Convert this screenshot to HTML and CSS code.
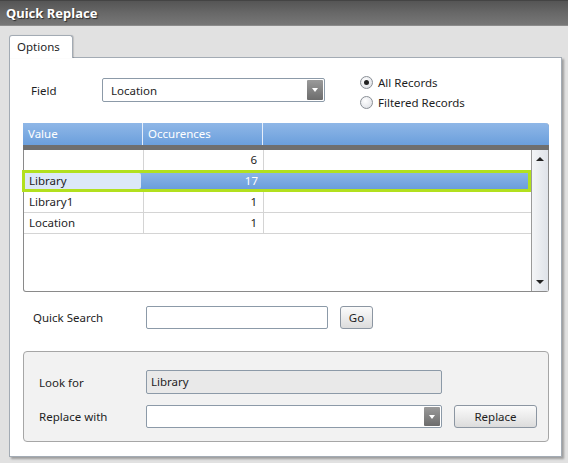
FILE: index.html
```html
<!DOCTYPE html>
<html lang="en">
<head>
  <meta charset="UTF-8">
  <title>Quick Replace</title>
  <link rel="stylesheet" href="styles.css">
</head>
<body>
  <div class="titlebar">Quick Replace</div>

  <div class="content">
    <div class="tabs">
      <div class="tab">Options</div>
    </div>

    <div class="panel">
      <div class="field-row">
        <span class="field-label">Field</span>
        <div class="combo field-combo">
          <span class="combo-text">Location</span>
          <span class="combo-btn"></span>
        </div>
        <div class="radios">
          <div class="radio"><span class="dot checked"></span>All Records</div>
          <div class="radio"><span class="dot"></span>Filtered Records</div>
        </div>
      </div>

      <div class="grid">
        <div class="grid-head">
          <div class="hcol c1">Value</div>
          <div class="hcol c2">Occurences</div>
          <div class="hcol c3"></div>
        </div>
        <div class="grid-band"></div>
        <div class="grid-body">
          <div class="rows">
            <div class="row">
              <div class="cell c1"></div>
              <div class="cell c2">6</div>
              <div class="cell c3"></div>
            </div>
            <div class="row selected">
              <div class="cell c1">Library</div>
              <div class="cell c2">17</div>
              <div class="cell c3"></div>
            </div>
            <div class="row">
              <div class="cell c1">Library1</div>
              <div class="cell c2">1</div>
              <div class="cell c3"></div>
            </div>
            <div class="row">
              <div class="cell c1">Location</div>
              <div class="cell c2">1</div>
              <div class="cell c3"></div>
            </div>
          </div>
          <div class="scrollbar">
            <span class="arrow up"></span>
            <span class="arrow down"></span>
          </div>
        </div>
      </div>

      <div class="search-row">
        <span class="search-label">Quick Search</span>
        <div class="textbox search-box"></div>
        <button class="btn go-btn">Go</button>
      </div>

      <div class="group">
        <div class="group-row">
          <span class="group-label">Look for</span>
          <div class="textbox look-box">Library</div>
        </div>
        <div class="group-row">
          <span class="group-label">Replace with</span>
          <div class="combo replace-combo">
            <span class="combo-text"></span>
            <span class="combo-btn"></span>
          </div>
          <button class="btn replace-btn">Replace</button>
        </div>
      </div>
    </div>
  </div>
</body>
</html>
```

FILE: styles.css
```css
body {
  margin: 0;
  padding: 0;
  width: 568px;
  height: 463px;
  background: #e1e1e1;
  font-family: 'Noto Sans', 'DejaVu Sans', sans-serif;
  font-size: 11.5px;
  color: #1e1e1e;
  overflow: hidden;
}

.titlebar {
  height: 24px;
  line-height: 24px;
  padding-left: 6px;
  background: linear-gradient(#555555, #686868 50%, #777777);
  border-top: 1px solid #444444;
  border-bottom: 1px solid #8c8c8c;
  color: white;
  font-weight: bold;
  font-size: 13px;
  text-shadow: 1px 1px 1px #2a2a2a;
  box-sizing: content-box;
}

.content {
  padding: 9px 6px 0 9px;
}

/* tab strip */
.tabs {
  display: flex;
}

.tab {
  width: 55px;
  height: 22px;
  line-height: 22px;
  padding-left: 7px;
  background: white;
  border: 1px solid #a3abb4;
  border-bottom: none;
  border-radius: 3px 3px 0 0;
  box-shadow: 1px 0 1px rgba(0, 0, 0, 0.15);
  position: relative;
  z-index: 1;
  margin-bottom: -1px;
}

.panel {
  background: white;
  border: 1px solid #a3abb4;
  box-shadow: 2px 2px 2px rgba(0, 0, 0, 0.3);
  padding: 20px 12px 14px 13px;
}

/* field row */
.field-row {
  display: flex;
  align-items: flex-start;
  height: 24px;
}

.field-label {
  width: 71px;
  margin-left: 8px;
  line-height: 25px;
}

.combo {
  display: flex;
  align-items: center;
  box-sizing: border-box;
  border: 1px solid #8c9aa8;
  border-radius: 2px;
  background: white;
  padding: 1px;
}

.combo-text {
  flex: 1;
  padding-left: 7px;
}

.combo-btn {
  width: 16px;
  align-self: stretch;
  background: linear-gradient(#9a9a9a, #6c6c6c);
  border-radius: 1px;
  position: relative;
}

.combo-btn::after {
  content: "";
  position: absolute;
  left: 5px;
  top: 50%;
  margin-top: -2px;
  border-left: 3px solid transparent;
  border-right: 3px solid transparent;
  border-top: 4px solid white;
}

.field-combo {
  width: 223px;
  height: 24px;
}

.radios {
  margin-left: 35px;
  margin-top: -6px;
}

.radio {
  display: flex;
  align-items: center;
  height: 20px;
}

.dot {
  width: 11px;
  height: 11px;
  border: 1px solid #8a8f96;
  border-radius: 50%;
  background: radial-gradient(circle at 40% 35%, #ffffff, #e4e6ea 70%, #cfd3d8);
  margin-right: 5px;
  position: relative;
}

.dot.checked::after {
  content: "";
  position: absolute;
  left: 3px;
  top: 3px;
  width: 5px;
  height: 5px;
  border-radius: 50%;
  background: #222222;
}

/* grid */
.grid {
  margin-top: 21px;
  width: 526px;
  height: 169px;
  box-sizing: border-box;
  border: 1px solid #8a8a8a;
  border-top: none;
  border-radius: 0 4px 3px 3px;
  display: flex;
  flex-direction: column;
}

.grid-head {
  display: flex;
  height: 22px;
  background: linear-gradient(#8fb7e7, #6b9fdc);
  border-radius: 0 4px 0 0;
  color: white;
  margin: 0 -1px;
}

.hcol {
  line-height: 22px;
  padding-left: 5px;
  box-sizing: border-box;
}

.grid-head .c1,
.grid-head .c2 {
  border-right: 1px solid #e6eefa;
}

.c1 {
  width: 120px;
}

.c2 {
  width: 120px;
}

.c3 {
  flex: 1;
}

.grid-band {
  height: 5px;
  background: #6f6f6f;
  margin: 0 -1px;
}

.grid-body {
  flex: 1;
  display: flex;
}

.rows {
  flex: 1;
}

.row {
  display: flex;
  height: 21px;
  border-bottom: 1px solid #d4d4d4;
  box-sizing: border-box;
}

.cell {
  box-sizing: border-box;
  line-height: 20px;
  padding: 0 6px 0 5px;
}

.row .c1,
.row .c2 {
  border-right: 1px solid #d4d4d4;
}

.row .c2 {
  text-align: right;
}

.row.selected {
  height: 22px;
  margin-top: -1px;
  margin-left: -2px;
  border: 3px solid #b2e01e;
  background: linear-gradient(#8ab4e6, #6a9edc);
  color: white;
}

.row.selected .cell {
  line-height: 16px;
  border-right: none;
}

.row.selected .c1 {
  width: 116px;
  color: #1e1e1e;
  background: #dce8f8;
  border-radius: 0 2px 2px 0;
  padding-left: 4px;
}

.row.selected .c2 {
  width: 122px;
  padding-right: 5px;
}

.scrollbar {
  width: 16px;
  border-left: 1px solid #9a9a9a;
  background: linear-gradient(90deg, #f4f5f7, #dfe3e9);
  position: relative;
}

.arrow {
  position: absolute;
  left: 4px;
  border-left: 4px solid transparent;
  border-right: 4px solid transparent;
}

.arrow.up {
  top: 7px;
  border-bottom: 4px solid #222222;
}

.arrow.down {
  bottom: 7px;
  border-top: 4px solid #222222;
}

/* quick search */
.search-row {
  display: flex;
  align-items: center;
  margin-top: 14px;
  height: 23px;
}

.search-label {
  width: 113px;
  margin-left: 10px;
}

.textbox {
  box-sizing: border-box;
  height: 23px;
  line-height: 21px;
  border: 1px solid #8c9aa8;
  border-radius: 2px;
  background: white;
  padding-left: 4px;
}

.search-box {
  width: 182px;
}

.btn {
  box-sizing: border-box;
  height: 23px;
  border: 1px solid #8c96a2;
  border-radius: 3px;
  background: linear-gradient(#fbfbfb, #ececec 50%, #dcdcdc);
  font-family: inherit;
  font-size: 11.5px;
  color: #1e1e1e;
  padding: 0;
  margin-left: 12px;
}

.go-btn {
  width: 33px;
}

/* replace group */
.group {
  margin-top: 22px;
  width: 526px;
  height: 91px;
  box-sizing: border-box;
  border: 1px solid #a6a6a6;
  border-radius: 4px;
  background: #f2f2f2;
  padding-top: 18px;
}

.group-row {
  display: flex;
  align-items: center;
  margin-bottom: 11px;
}

.group-label {
  width: 107px;
  margin-left: 15px;
}

.look-box {
  width: 296px;
  height: 24px;
  line-height: 22px;
  background: #e9e9e9;
}

.replace-combo {
  width: 296px;
  height: 23px;
}

.replace-btn {
  width: 83px;
}
```
